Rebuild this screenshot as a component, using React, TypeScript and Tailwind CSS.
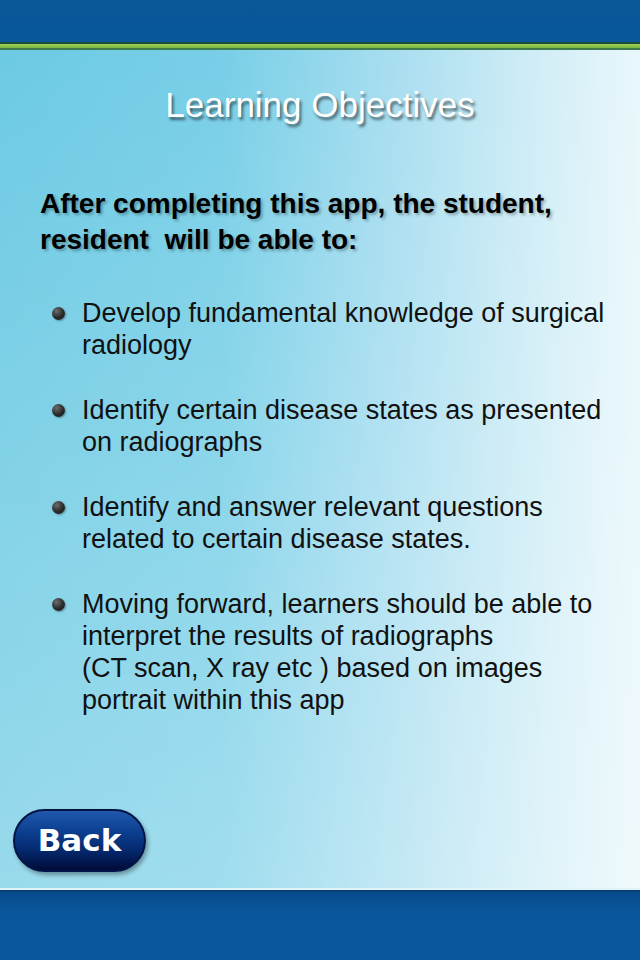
const objectives = [
  ["Develop fundamental knowledge of surgical", "radiology"],
  ["Identify certain disease states as presented", "on radiographs"],
  ["Identify and answer relevant questions", "related to certain disease states."],
  [
    "Moving forward, learners should be able to",
    "interpret the results of radiographs",
    "(CT scan, X ray etc ) based on images",
    "portrait within this app",
  ],
];

function Bullet() {
  return (
    <span className="mt-[10px] h-[13px] w-[13px] shrink-0 rounded-full bg-[radial-gradient(circle_at_35%_30%,#6b6b6b_0%,#2a2a2a_55%,#111_100%)] shadow-[1px_1px_2px_rgba(0,0,0,0.35)]" />
  );
}

export default function App() {
  return (
    <div className="flex h-[960px] w-[640px] flex-col overflow-hidden font-['Liberation_Sans',Arial,sans-serif]">
      {/* top bar */}
      <div className="h-[42px] bg-[linear-gradient(to_bottom,#0a5798,#07579b)]" />
      <div className="h-[2px] bg-[#1f4b3a]" />
      <div className="h-[4px] bg-[linear-gradient(to_bottom,#9ccf55,#7ab642)]" />
      <div className="h-[2px] bg-[#3f7a4a]" />

      {/* body */}
      <div className="flex flex-1 flex-col bg-[linear-gradient(to_bottom,rgba(255,255,255,0)_0%,rgba(255,255,255,0.3)_100%),linear-gradient(to_right,#6ccae3_0%,#78cfe7_35%,#a9def0_62%,#d2eef7_85%,#e9f7fb_100%)]">
        <h1 className="mt-[34px] text-center text-[35px] leading-[42px] text-white [text-shadow:2px_3px_3px_rgba(0,0,0,0.55)]">
          Learning Objectives
        </h1>

        <p className="mt-[60px] pl-[40px] text-[28px] font-bold leading-[36px] text-black [text-shadow:2px_2px_3px_rgba(0,0,0,0.3)]">
          After completing this app, the student,
          <br />
          resident&nbsp; will be able to:
        </p>

        <ul className="mt-[39px] flex flex-col gap-[33px] pl-[52px]">
          {objectives.map((lines, i) => (
            <li key={i} className="flex gap-[17px]">
              <Bullet />
              <div className="text-[27px] leading-[32px] text-[#111]">
                {lines.map((l, j) => (
                  <div key={j}>{l}</div>
                ))}
              </div>
            </li>
          ))}
        </ul>

        <div className="mt-auto mb-[16px] pl-[13px]">
          <button className="flex h-[63px] w-[133px] items-center justify-center rounded-full border-2 border-[#021445] bg-[linear-gradient(to_bottom,#1f58ad_0%,#0c3f90_35%,#052a70_65%,#010b38_100%)] text-[31px] font-bold text-white shadow-[2px_3px_4px_rgba(0,0,0,0.35)] font-['DejaVu_Sans',Verdana,sans-serif]">
            Back
          </button>
        </div>
      </div>

      {/* bottom bar */}
      <div className="h-[2px] bg-[#dff4fb]" />
      <div className="h-[2px] bg-[#083f75]" />
      <div className="h-[68px] bg-[linear-gradient(to_bottom,#074b8a,#0a569c_30%,#0a579e)]" />
    </div>
  );
}
